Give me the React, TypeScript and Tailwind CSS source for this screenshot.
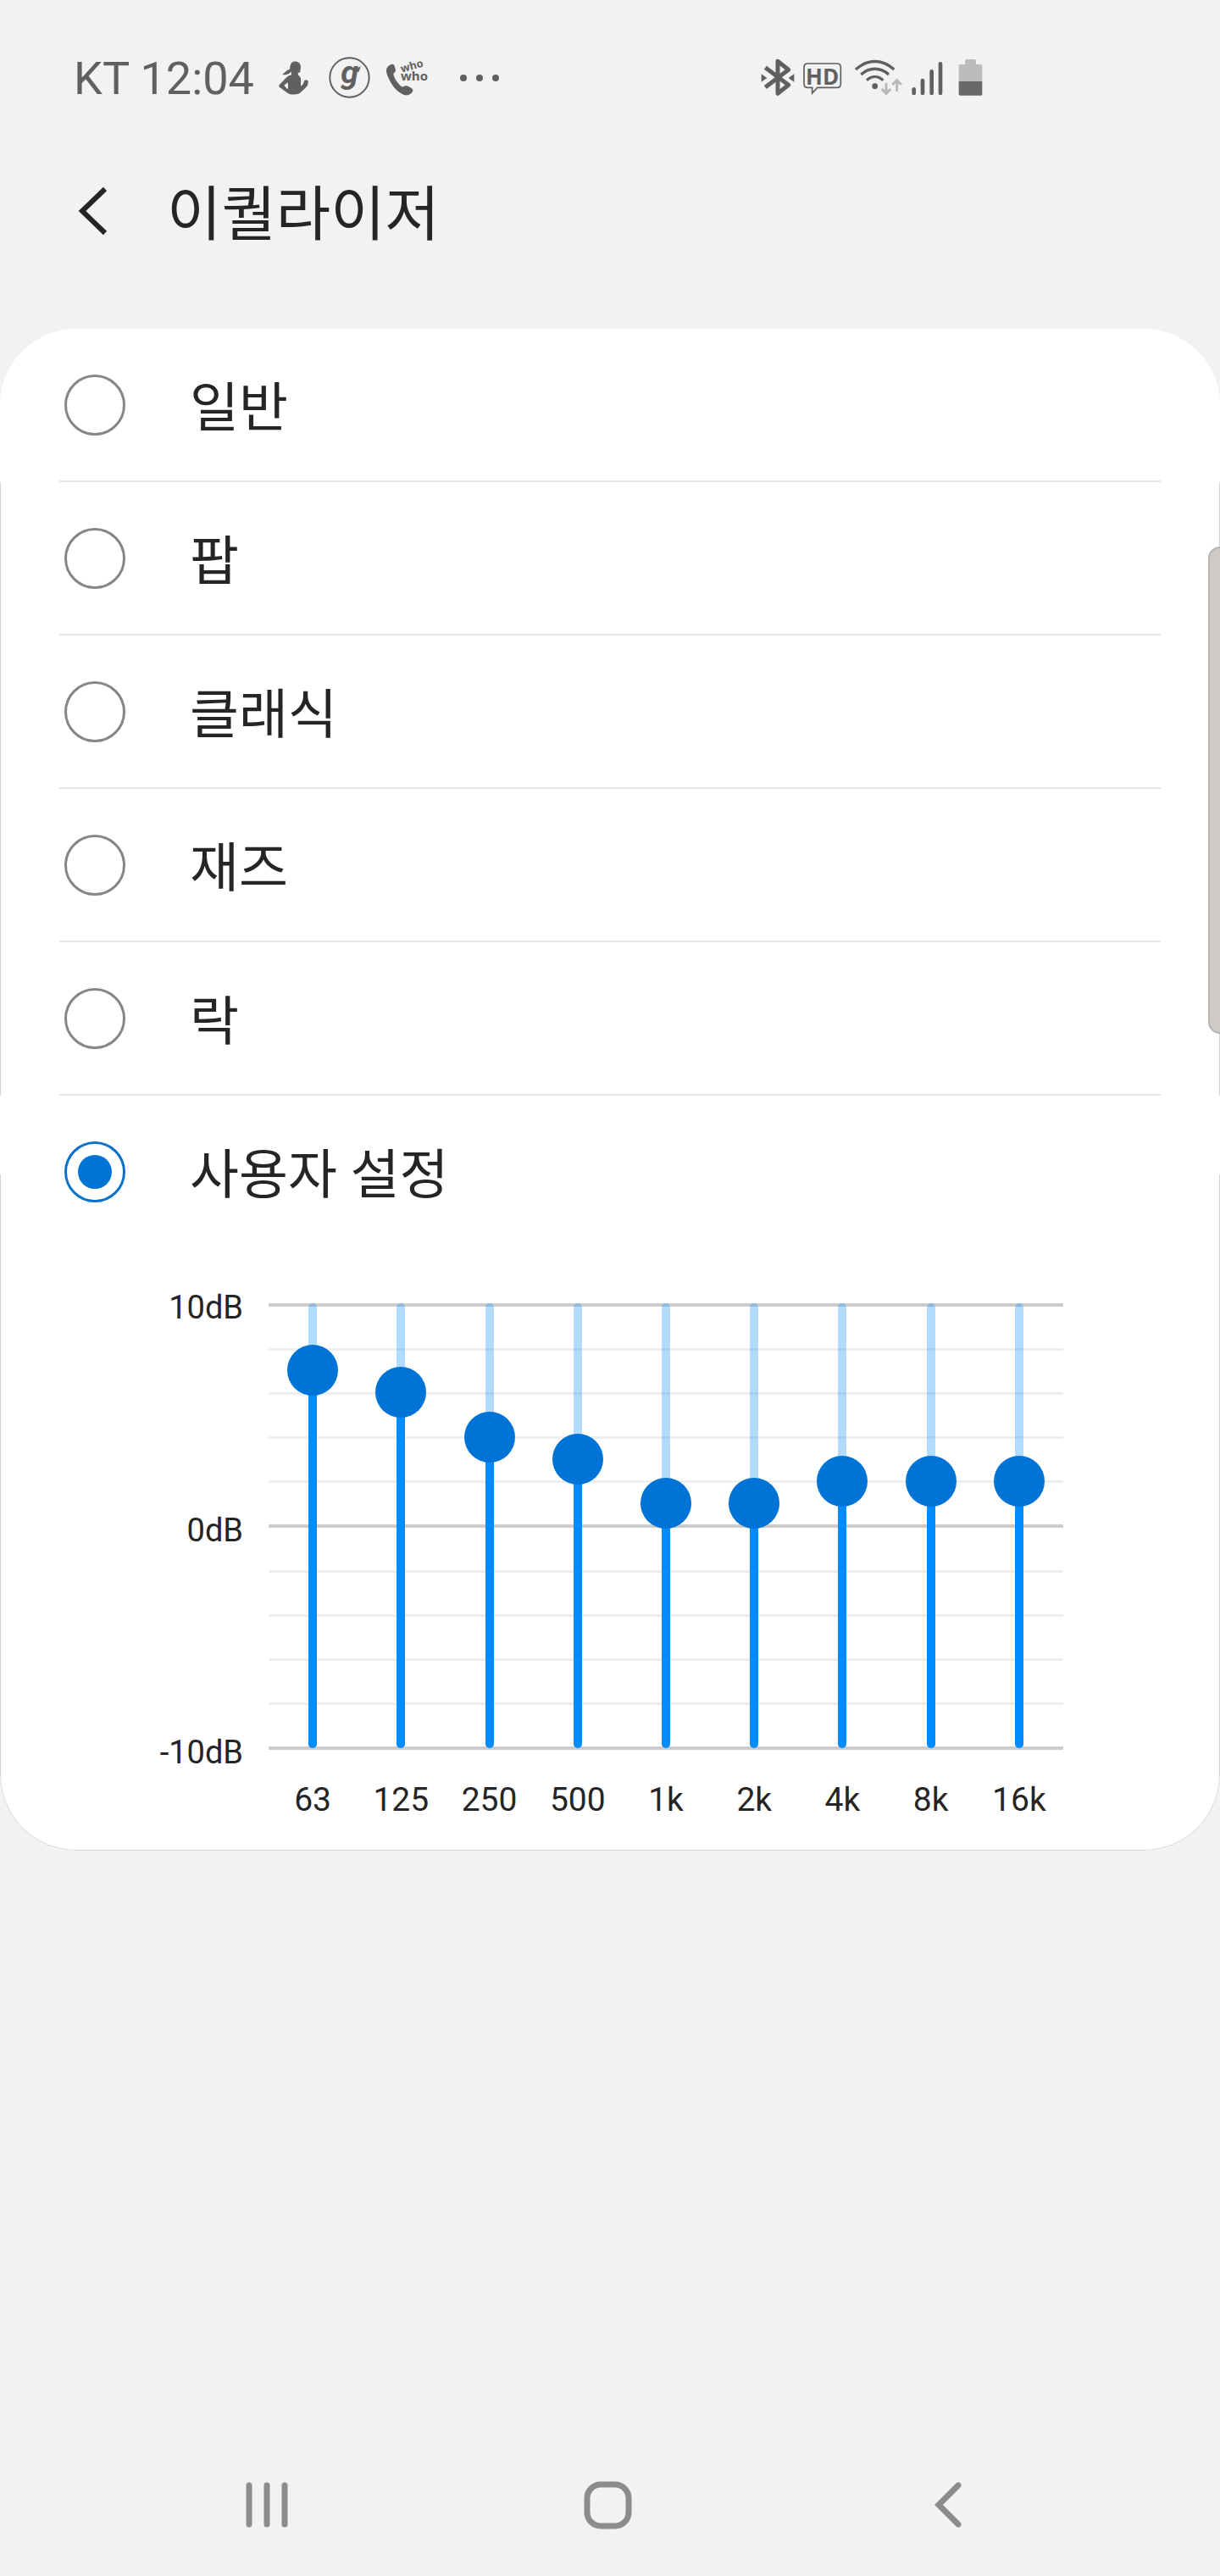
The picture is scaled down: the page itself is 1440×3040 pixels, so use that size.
import React, { useState } from 'react';

type Band = {
  label: string;
  value: number;
};

const PRESETS = [
  { id: 'normal', name: '일반' },
  { id: 'pop', name: '팝' },
  { id: 'classic', name: '클래식' },
  { id: 'jazz', name: '재즈' },
  { id: 'rock', name: '락' },
];

const INITIAL_BANDS: Band[] = [
  { label: '63', value: 7 },
  { label: '125', value: 6 },
  { label: '250', value: 4 },
  { label: '500', value: 3 },
  { label: '1k', value: 1 },
  { label: '2k', value: 1 },
  { label: '4k', value: 2 },
  { label: '8k', value: 2 },
  { label: '16k', value: 2 },
];

const GRID_LINES = [10, 8, 6, 4, 2, 0, -2, -4, -6, -8, -10];

function StatusBar() {
  return (
    <div className="flex h-[183px] items-center pl-[87px] pr-[280px] text-[#606060]">
      <span className="pt-0.5 text-[54px] leading-[60px]">KT 12:04</span>

      {/* Notification icons */}
      <div className="ml-[29px] flex items-center">
        <svg className="h-10 w-[35px]" viewBox="27 35 105 119" fill="currentColor">
          <path d="M84 36c13 0 21 8 21 20l-2 15c-1 5-4 5-8 5l1 9c5 3 9 8 9 14v24c5-3 9-8 11-13 0-7 3-8 9-8 5 0 7 3 6 8l-2 11c-6 8-14 16-24 24-4 6-12 8-25 8-12 0-18-2-24-7L29 127c-2-3-1-6 1-9l24-25c6-6 13-8 18-9l-1-13c-4 7-12 11-21 12-6 1-10 0-10-1l13-11c5-5 11-6 13-7 1-17 6-28 18-28zM58 110l-12 11 12 14c3-9 3-18 0-25z" />
        </svg>
        <svg className="ml-6 size-[49px] overflow-visible" viewBox="206 20 148 148" fill="none">
          <circle cx="280" cy="94" r="70" stroke="currentColor" strokeWidth="6" />
          <text x="281" y="114" textAnchor="middle" fill="currentColor" className="text-[114px] leading-none font-bold italic">
            g
          </text>
          <path d="M297 64c8-2 16-5 24-11l-9 23z" fill="currentColor" />
        </svg>
        <svg className="ml-[19px] h-[42px] w-[49px] overflow-visible" viewBox="408 32 147 126" fill="currentColor">
          <path d="M427 47c7-2 9 3 11 10 3 8 5 14 0 18-5 3-6 6-4 11 4 14 14 27 26 38 4 3 8 3 12 0 5-3 10-1 16 2 10 5 16 9 14 15-5 11-15 17-28 15-18-5-38-23-51-46-9-17-16-32-15-44 2-10 9-17 19-19z" />
          <text x="463" y="76" transform="rotate(-16 463 76)" className="font-['Open_Sans'] text-[38px] font-bold">
            who
          </text>
          <text x="459" y="104" className="font-['Open_Sans'] text-[45px] font-bold">
            who
          </text>
        </svg>
        <svg className="ml-[38px] h-2 w-[46px]" viewBox="0 0 46 8" fill="currentColor">
          <circle cx="4" cy="4" r="4" />
          <circle cx="23" cy="4" r="4" />
          <circle cx="42" cy="4" r="4" />
        </svg>
      </div>

      {/* System icons */}
      <svg className="ml-auto h-[45px] w-[262px]" viewBox="56 54 786 135" fill="none">
        <g stroke="currentColor">
          <path
            d="M72 86l82 62-38 30V64l38 30-82 62"
            strokeWidth="15"
            strokeLinejoin="round"
          />
          <path
            d="M222 72h104q13 0 13 13v58q0 14-13 14h-70l-18 20v-20h-16q-13 0-13-14V85q0-13 13-13z"
            strokeWidth="5"
          />
          <path d="M392 93c42-38 94-38 136 0M411 111c30-27 68-27 98 0M431 131c18-16 40-16 58 0" strokeWidth="10" />
          <path d="M598 163v14M629 132v45M661 100v77M692 73v104" strokeWidth="14" strokeLinecap="round" />
        </g>
        <path d="M58 109l20 14-20 14zM174 109l-20 14 20 14z" fill="currentColor" />
        <text x="274" y="146" textAnchor="middle" fill="currentColor" className="font-['Open_Sans'] text-[78px] font-bold">
          HD
        </text>
        <circle cx="460" cy="152" r="10" fill="currentColor" />
        <g stroke="#b8b8b8" strokeWidth="9">
          <path d="M500 141v36M484 162l16 16 16-16M538 170v-38M522 147l16-16 16 16" />
        </g>
        <path d="M757 135V80q0-5 5-5h17V62q0-5 5-5h29q5 0 5 5v13h17q5 0 5 5v55z" fill="#bcbcbc" />
        <path d="M757 135h83v45q0 5-5 5h-73q-5 0-5-5z" fill="#686868" />
      </svg>
    </div>
  );
}

function RadioOption({
  name,
  checked,
  onSelect,
}: {
  name: string;
  checked: boolean;
  onSelect: () => void;
}) {
  return (
    <label className="flex h-[179px] items-center gap-[76px] pl-[6px]">
      <input
        type="radio"
        name="preset"
        checked={checked}
        onChange={onSelect}
        className="grid size-[72px] shrink-0 appearance-none place-items-center rounded-full border-3 border-[#868686] before:size-10 before:rounded-full checked:border-[#0b72c9] checked:before:bg-[#0074d6]"
      />
      <span className="pt-2 text-[63px] leading-[90px]">{name}</span>
    </label>
  );
}

function BandSlider({ band, onChange }: { band: Band; onChange: (value: number) => void }) {
  return (
    <div className="relative flex h-[525px] justify-center">
      <div className="flex h-full w-[10px] flex-col justify-end rounded-full bg-[#008cff]/30">
        <div
          className="rounded-full bg-[#008cff]"
          style={{ height: `${((band.value + 10) / 20) * 100}%` }}
        />
      </div>
      <input
        type="range"
        min={-10}
        max={10}
        value={band.value}
        aria-label={band.label}
        onChange={(e) => onChange(Number(e.target.value))}
        className="absolute -top-[30px] h-[585px] w-[60px] appearance-none bg-transparent [direction:rtl] [writing-mode:vertical-lr] [&::-webkit-slider-thumb]:size-[60px] [&::-webkit-slider-thumb]:appearance-none [&::-webkit-slider-thumb]:rounded-full [&::-webkit-slider-thumb]:bg-[#0074d6]"
      />
    </div>
  );
}

function EqualizerChart() {
  const [bands, setBands] = useState<Band[]>(INITIAL_BANDS);

  const handleBandChange = (index: number, value: number) => {
    setBands(prev => prev.map((band, i) => (i === index ? { ...band, value } : band)));
  };

  return (
    <div className="flex gap-[30px] pb-9 pr-[184px] pt-[46px] leading-[46px]">
      <div className="flex h-[571px] w-[286px] flex-col justify-between text-right text-[38px]">
        <span>10dB</span>
        <span>0dB</span>
        <span>-10dB</span>
      </div>

      <div className="mt-[18px] flex-1">
        <div className="grid">
          {/* Grid lines */}
          <div className="col-start-1 row-start-1 flex h-[527px] flex-col justify-between">
            {GRID_LINES.map((db) => (
              <div key={db} className={db % 10 === 0 ? 'h-1 bg-[#cccccc]' : 'h-[3px] bg-[#eeeeee]'} />
            ))}
          </div>

          {/* Sliders */}
          <div className="col-start-1 row-start-1 grid grid-cols-9">
            {bands.map((band, index) => (
              <BandSlider
                key={band.label}
                band={band}
                onChange={(value) => handleBandChange(index, value)}
              />
            ))}
          </div>
        </div>

        <div className="mt-9 grid grid-cols-9 text-center text-[39px]">
          {bands.map((band) => (
            <span key={band.label}>{band.label}</span>
          ))}
        </div>
      </div>
    </div>
  );
}

function NavigationBar() {
  return (
    <nav className="grid h-[168px] grid-cols-3 place-items-center pl-[114px] pr-[120px] text-[#8c8c8c]">
      <button aria-label="최근 앱">
        <svg className="h-[54px] w-[50px]" viewBox="0 0 50 54" stroke="currentColor" strokeWidth="7" strokeLinecap="round">
          <path d="M4 4v46M25 4v46M46 4v46" />
        </svg>
      </button>
      <button aria-label="홈">
        <svg className="size-[57px]" viewBox="0 0 57 57" fill="none" stroke="currentColor" strokeWidth="7">
          <rect x="4" y="4" width="49" height="49" rx="16" />
        </svg>
      </button>
      <button aria-label="뒤로">
        <svg className="h-[54px] w-8" viewBox="0 0 32 54" fill="none" stroke="currentColor" strokeWidth="7" strokeLinecap="round">
          <path d="M28 4L5 27l23 23" />
        </svg>
      </button>
    </nav>
  );
}

export default function App() {
  const [selected, setSelected] = useState('custom');

  return (
    <div className="relative flex min-h-screen flex-col overflow-hidden bg-[#f2f2f2] font-[Roboto,'Noto_Sans_CJK_KR',sans-serif] text-[#252525]">
      <StatusBar />

      {/* Header */}
      <header className="mb-[68px] flex h-[137px] items-center pl-[92px]">
        <button aria-label="뒤로" className="pb-[6px]">
          <svg className="h-[58px] w-[36px]" viewBox="0 0 36 58" fill="none" stroke="currentColor" strokeWidth="6">
            <path d="M32 3L5 29l27 26" />
          </svg>
        </button>
        <h1 className="ml-[69px] pt-1 text-[70px] leading-[100px]">이퀄라이저</h1>
      </header>

      {/* Presets */}
      <main className="flex-1">
        <div className="overflow-hidden rounded-[90px] bg-white">
          {PRESETS.map((preset) => (
            <div key={preset.id} className="border-x border-[#d4d4d4] px-[69px] first:border-white">
              <div className="border-b-2 border-[#e5e5e5]">
                <RadioOption
                  name={preset.name}
                  checked={selected === preset.id}
                  onSelect={() => setSelected(preset.id)}
                />
              </div>
            </div>
          ))}

          <section className="rounded-b-[90px] border border-t-0 border-[#d4d4d4]">
            {/* Side borders start halfway down this row */}
            <div className="-mx-px mb-[88px] h-[93px] bg-white px-[70px]">
              <RadioOption
                name="사용자 설정"
                checked={selected === 'custom'}
                onSelect={() => setSelected('custom')}
              />
            </div>
            <EqualizerChart />
          </section>
        </div>
      </main>

      <NavigationBar />

      {/* Edge panel handle */}
      <button
        aria-label="엣지 패널"
        className="absolute right-0 top-[645px] h-[575px] w-[14px] rounded-l-[14px] border-2 border-r-0 border-[#b5b5b5] bg-[#cfcac6]"
      />
    </div>
  );
}
